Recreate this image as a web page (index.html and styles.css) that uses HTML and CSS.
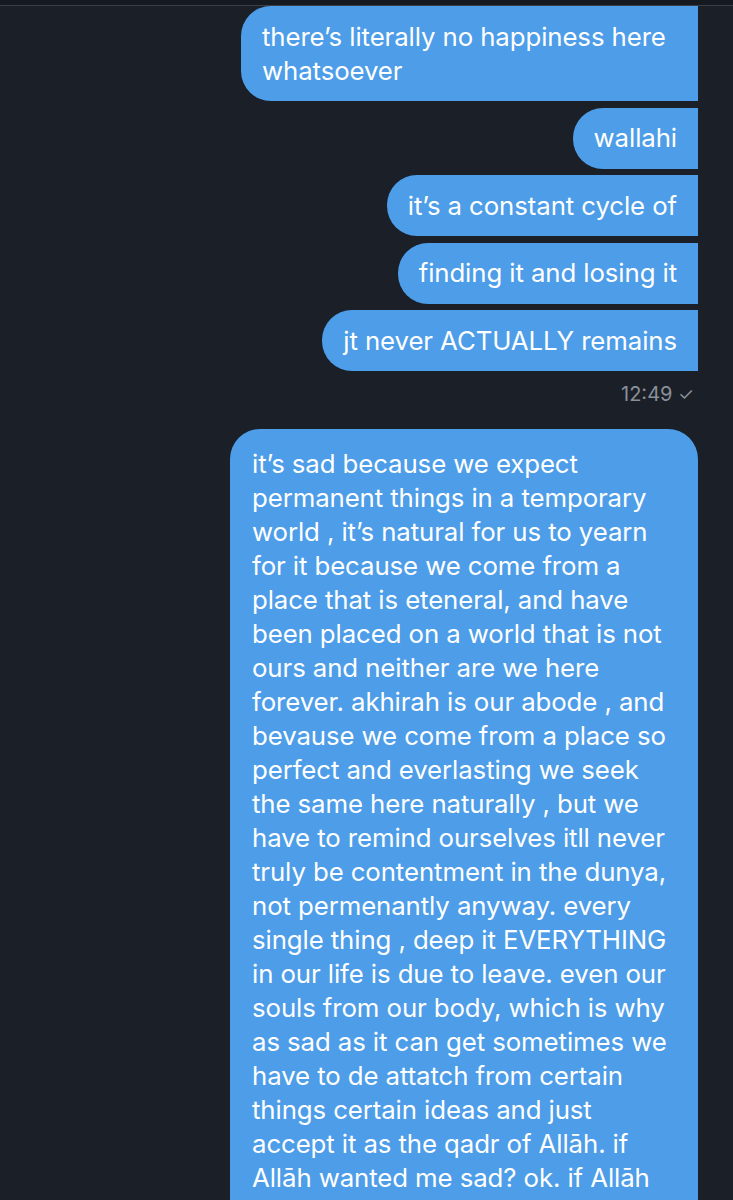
FILE: index.html
```html
<!DOCTYPE html>
<html>
<head>
<meta charset="utf-8">
<link rel="stylesheet" href="styles.css">
</head>
<body>
<div class="topline"></div>
<div class="chat">
  <div class="bubble out wide">there’s literally no happiness here<br>whatsoever</div>
  <div class="bubble out">wallahi</div>
  <div class="bubble out">it’s a constant cycle of</div>
  <div class="bubble out">finding it and losing it</div>
  <div class="bubble out">jt never ACTUALLY remains</div>
  <div class="time">12:49 <span class="check">✓</span></div>
  <div class="bubble big"><span class="ln">it’s sad because we expect</span><span class="ln">permanent things in a temporary</span><span class="ln">world , it’s natural for us to yearn</span><span class="ln">for it because we come from a</span><span class="ln">place that is eteneral, and have</span><span class="ln">been placed on a world that is not</span><span class="ln">ours and neither are we here</span><span class="ln">forever. akhirah is our abode , and</span><span class="ln">bevause we come from a place so</span><span class="ln">perfect and everlasting we seek</span><span class="ln">the same here naturally , but we</span><span class="ln">have to remind ourselves itll never</span><span class="ln">truly be contentment in the dunya,</span><span class="ln">not permenantly anyway. every</span><span class="ln">single thing , deep it EVERYTHING</span><span class="ln">in our life is due to leave. even our</span><span class="ln">souls from our body, which is why</span><span class="ln">as sad as it can get sometimes we</span><span class="ln">have to de attatch from certain</span><span class="ln">things certain ideas and just</span><span class="ln">accept it as the qadr of Allāh. if</span><span class="ln">Allāh wanted me sad? ok. if Allāh</span></div>
</div>
</body>
</html>
```
FILE: styles.css
```css
html, body {
  margin: 0;
  padding: 0;
  background: #1a1f28;
  height: 1200px;
  overflow: hidden;
}
body {
  font-family: Inter, "Open Sans", sans-serif;
  color: #fff;
}
.topline {
  height: 5px;
  background: #151920;
  border-bottom: 1px solid #3a3f48;
}
.chat {
  display: flex;
  flex-direction: column;
  align-items: flex-end;
  gap: 6.5px;
  padding: 0 35px 0 0;
}
.bubble {
  background: #4d9de8;
  font-size: 25.8px;
  line-height: 34px;
  letter-spacing: -0.1px;
  color: #fff;
  white-space: nowrap;
}
.out {
  padding: 13.5px 21px 13.5px 21px;
  border-radius: 30px 0 0 30px;
}
.wide {
  width: 457px;
  box-sizing: border-box;
}
.time {
  font-size: 20px;
  color: #8a9099;
  padding: 5px 4px 0 0;
  height: 39px;
  box-sizing: border-box;
  line-height: 22px;
}
.check {
  font-size: 18px;
}
.big {
  width: 468px;
  box-sizing: border-box;
  padding: 18px 20px 60px 22px;
  border-radius: 30px 30px 0 30px;
  margin-top: 6px;
}
.ln {
  display: block;
}
```
